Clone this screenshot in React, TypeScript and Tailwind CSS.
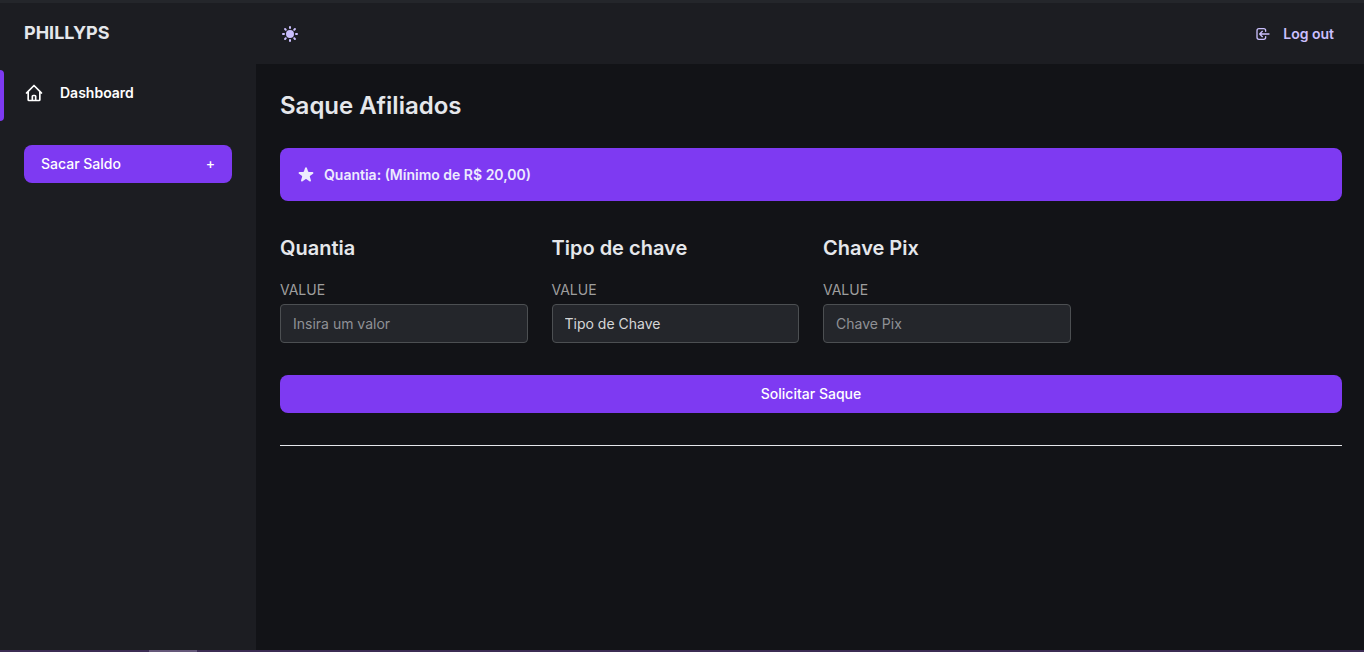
import type { ReactNode } from "react";

type FieldProps = {
  id: string;
  title: string;
  children: ReactNode;
};

const controlClass =
  "mt-1 block h-[39px] w-full appearance-none rounded-sm border border-[#4c4f52] bg-[#24262b] px-3 text-sm text-[#d5d6d7] placeholder:text-[#8f9196] placeholder:opacity-100 focus:border-[#7e3af2] focus:outline-none";

function HomeIcon() {
  return (
    <svg
      className="size-5"
      aria-hidden="true"
      fill="none"
      strokeLinecap="round"
      strokeLinejoin="round"
      strokeWidth="2"
      viewBox="0 0 24 24"
      stroke="currentColor"
    >
      <path d="M3 12l2-2m0 0l7-7 7 7M5 10v10a1 1 0 001 1h3m10-11l2 2m-2-2v10a1 1 0 01-1 1h-3m-6 0a1 1 0 001-1v-4a1 1 0 011-1h2a1 1 0 011 1v4a1 1 0 001 1m-6 0h6" />
    </svg>
  );
}

function SunIcon() {
  return (
    <svg className="size-5" aria-hidden="true" fill="currentColor" viewBox="0 0 20 20">
      <path
        fillRule="evenodd"
        clipRule="evenodd"
        d="M10 2a1 1 0 011 1v1a1 1 0 11-2 0V3a1 1 0 011-1zm4 8a4 4 0 11-8 0 4 4 0 018 0zm-.464 4.95l.707.707a1 1 0 001.414-1.414l-.707-.707a1 1 0 00-1.414 1.414zm2.12-10.607a1 1 0 010 1.414l-.706.707a1 1 0 11-1.414-1.414l.707-.707a1 1 0 011.414 0zM17 11a1 1 0 100-2h-1a1 1 0 100 2h1zm-7 4a1 1 0 011 1v1a1 1 0 11-2 0v-1a1 1 0 011-1zM5.05 6.464A1 1 0 106.465 5.05l-.708-.707a1 1 0 00-1.414 1.414l.707.707zm1.414 8.486l-.707.707a1 1 0 01-1.414-1.414l.707-.707a1 1 0 011.414 1.414zM4 11a1 1 0 100-2H3a1 1 0 000 2h1z"
      />
    </svg>
  );
}

function LogoutIcon() {
  return (
    <svg
      className="size-4"
      aria-hidden="true"
      fill="none"
      strokeLinecap="round"
      strokeLinejoin="round"
      strokeWidth="2"
      viewBox="0 0 24 24"
      stroke="currentColor"
    >
      <path d="M11 16l-4-4m0 0l4-4m-4 4h14m-5 4v1a3 3 0 01-3 3H6a3 3 0 01-3-3V7a3 3 0 013-3h7a3 3 0 013 3v1" />
    </svg>
  );
}

function StarIcon() {
  return (
    <svg className="size-5" aria-hidden="true" fill="currentColor" viewBox="0 0 20 20">
      <path d="M9.049 2.927c.3-.921 1.603-.921 1.902 0l1.07 3.292a1 1 0 00.95.69h3.462c.969 0 1.371 1.24.588 1.81l-2.8 2.034a1 1 0 00-.364 1.118l1.07 3.292c.3.921-.755 1.688-1.54 1.118l-2.8-2.034a1 1 0 00-1.175 0l-2.8 2.034c-.784.57-1.838-.197-1.539-1.118l1.07-3.292a1 1 0 00-.364-1.118L2.98 8.72c-.783-.57-.38-1.81.588-1.81h3.461a1 1 0 00.951-.69l1.07-3.292z" />
    </svg>
  );
}

function Sidebar() {
  return (
    <aside className="w-64 shrink-0 bg-[#1c1d22]">
      <a href="#" className="mt-4 ml-6 block text-lg leading-[27px] font-bold text-[#e5e7eb]">
        PHILLYPS
      </a>
      {/* active item carries the purple marker on the left edge */}
      <nav className="mt-6 flex h-[51px] items-stretch">
        <span className="w-1 rounded-r-lg bg-[#7e3af2]" aria-hidden="true" />
        <a
          href="#"
          className="flex items-center gap-4 pb-[5px] pl-5 text-sm font-semibold text-white"
        >
          <HomeIcon />
          <span>Dashboard</span>
        </a>
      </nav>
      <div className="mt-6 px-6">
        <button
          type="button"
          className="flex w-full items-center justify-between rounded-lg border border-transparent bg-[#7e3af2] px-4 py-2 text-sm font-medium text-white"
        >
          Sacar Saldo
          <span aria-hidden="true">+</span>
        </button>
      </div>
    </aside>
  );
}

function Header() {
  return (
    <header className="flex h-[61px] items-center justify-between bg-[#1c1d22] pr-[30px] pl-6 text-[#cabffd]">
      <button type="button" aria-label="Toggle color mode" className="rounded-md">
        <SunIcon />
      </button>
      <a href="#" className="flex items-center gap-3 text-sm font-semibold">
        <LogoutIcon />
        <span>Log out</span>
      </a>
    </header>
  );
}

function Field({ id, title, children }: FieldProps) {
  return (
    <div>
      <h2 className="text-xl leading-[30px] font-semibold text-[#e5e7eb]">{title}</h2>
      <label htmlFor={id} className="mt-4 block text-sm leading-[21px] text-[#9e9e9e]">
        VALUE
      </label>
      {children}
    </div>
  );
}

export default function App() {
  return (
    <div className="flex min-h-screen flex-col bg-[#121317] font-['Inter',sans-serif]">
      <div className="h-[3px] bg-[#24262b]" />
      <div className="flex flex-1">
        <Sidebar />
        <div className="min-w-0 flex-1">
          <Header />
          <main className="pr-[22px] pb-6 pl-6">
            <h1 className="pt-[26px] text-2xl font-semibold text-[#e5e7eb]">
              Saque Afiliados
            </h1>
            <div className="mt-[26px] flex items-center gap-2 rounded-lg bg-[#7e3af2] p-4 text-sm leading-[21px] font-semibold text-[#edebfe]">
              <StarIcon />
              <span>Quantia: (Mínimo de R$ 20,00)</span>
            </div>
            <form onSubmit={(event) => event.preventDefault()}>
              <div className="mt-8 grid grid-cols-4 gap-6">
                <Field id="amount" title="Quantia">
                  <input
                    id="amount"
                    type="text"
                    placeholder="Insira um valor"
                    className={controlClass}
                  />
                </Field>
                <Field id="key-type" title="Tipo de chave">
                  <select id="key-type" className={controlClass}>
                    <option>Tipo de Chave</option>
                  </select>
                </Field>
                <Field id="pix-key" title="Chave Pix">
                  <input
                    id="pix-key"
                    type="text"
                    placeholder="Chave Pix"
                    className={controlClass}
                  />
                </Field>
              </div>
              <button
                type="submit"
                className="mt-8 w-full rounded-lg border border-transparent bg-[#7e3af2] px-4 py-2 text-sm font-medium text-white"
              >
                Solicitar Saque
              </button>
            </form>
            <hr className="mt-8 border-[#e5e7eb]" />
          </main>
        </div>
      </div>
      <div className="h-0.5 bg-[#3c2c54]">
        <div className="ml-[149px] h-full w-12 bg-[#65587a]" />
      </div>
    </div>
  );
}
